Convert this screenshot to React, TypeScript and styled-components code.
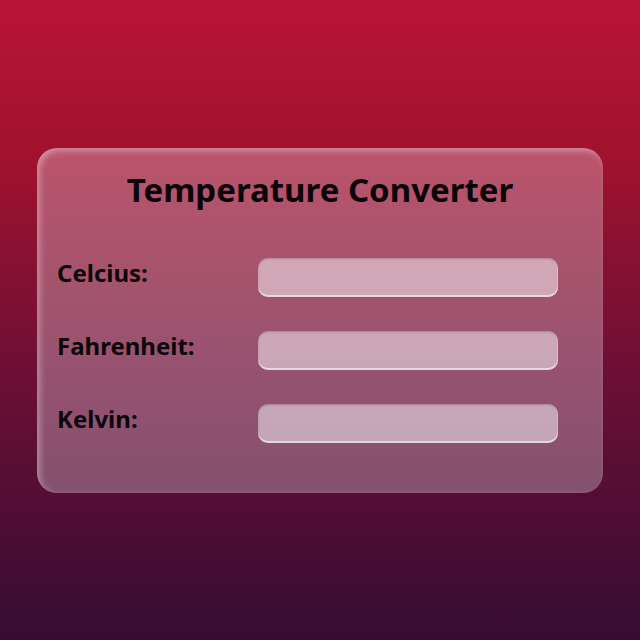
import React from "react";
import styled, { createGlobalStyle } from "styled-components";

const GlobalStyle = createGlobalStyle`
  html, body {
    margin: 0;
    padding: 0;
    height: 100%;
  }
  body {
    font-family: "Noto Sans", "Open Sans", sans-serif;
    background: linear-gradient(to bottom, #b91436 0%, #a0122f 25%, #6a0f35 60%, #360c33 100%);
  }
  #root {
    height: 100%;
  }
`;

const Page = styled.div`
  height: 640px;
  display: flex;
  align-items: center;
  justify-content: center;
`;

const Card = styled.div`
  width: 566px;
  height: 345px;
  box-sizing: border-box;
  padding: 22px 20px 0 20px;
  border-radius: 20px;
  background: rgba(245, 240, 250, 0.3);
  box-shadow: inset 3px 3px 6px rgba(255, 255, 255, 0.35);
  display: flex;
  flex-direction: column;
  align-items: center;
`;

const Title = styled.h1`
  margin: 0 0 48px 0;
  font-size: 33px;
  font-weight: 700;
  color: #0a0509;
  line-height: 40px;
`;

const Form = styled.div`
  align-self: stretch;
  display: grid;
  grid-template-columns: 201px 300px;
  row-gap: 34px;
  align-items: center;
`;

const Label = styled.label`
  font-size: 24px;
  line-height: 24px;
  font-weight: 700;
  color: #0a0509;
  margin-bottom: 8px;
`;

const Field = styled.input`
  height: 39px;
  box-sizing: border-box;
  border: none;
  border-radius: 10px;
  background: rgba(250, 245, 252, 0.52);
  box-shadow: inset 0 1px 2px rgba(0, 0, 0, 0.2), inset 0 -2px 0 rgba(255, 255, 255, 0.55),
    inset -1px 0 0 rgba(255, 255, 255, 0.4);
  outline: none;
  padding: 0 12px;
  font-size: 18px;
  font-family: inherit;
`;

const fields = ["Celcius:", "Fahrenheit:", "Kelvin:"];

export default function App() {
  return (
    <>
      <GlobalStyle />
      <Page>
        <Card>
          <Title>Temperature Converter</Title>
          <Form>
            {fields.map((f) => (
              <React.Fragment key={f}>
                <Label>{f}</Label>
                <Field type="text" />
              </React.Fragment>
            ))}
          </Form>
        </Card>
      </Page>
    </>
  );
}
